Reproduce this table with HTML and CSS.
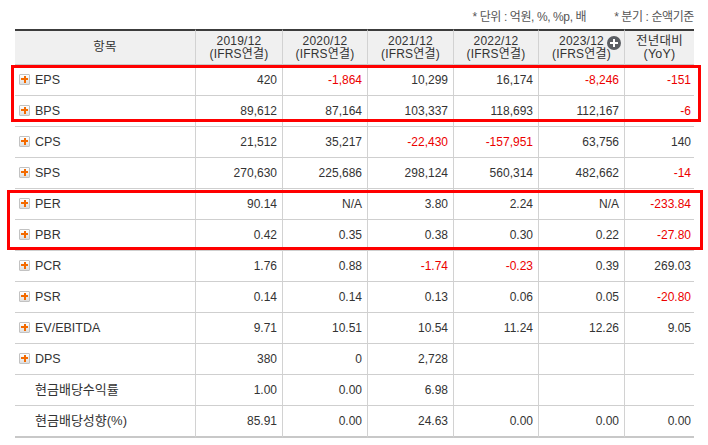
FILE: index.html
```html
<!DOCTYPE html>
<html lang="ko">
<head>
<meta charset="utf-8">
<title>재무비율</title>
<link rel="stylesheet" href="styles.css">
</head>
<body>
<div class="page">
  <div class="notes">
    <span>* 단위 : 억원, %, %p, 배</span>
    <span>* 분기 : 순액기준</span>
  </div>
  <table class="fin">
    <colgroup>
      <col class="c-label"><col class="c-87"><col class="c-85"><col class="c-86"><col class="c-85"><col class="c-86"><col class="c-yoy">
    </colgroup>
    <thead>
      <tr>
        <th class="th-ko">항목</th>
        <th>2019/12<br>(IFRS연결)</th>
        <th>2020/12<br>(IFRS연결)</th>
        <th>2021/12<br>(IFRS연결)</th>
        <th>2022/12<br>(IFRS연결)</th>
        <th class="th-more">2023/12<br>(IFRS연결)<span class="more"><svg width="14" height="14" viewBox="0 0 14 14"><circle cx="7" cy="7" r="7" fill="#5b5e63"/><path d="M3 7h8M7 3v8" stroke="#fff" stroke-width="2"/></svg></span></th>
        <th class="th-ko">전년대비<br>(YoY)</th>
      </tr>
    </thead>
    <tbody>
      <tr><td class="lbl"><span class="ico"></span>EPS</td><td>420</td><td class="neg">-1,864</td><td>10,299</td><td>16,174</td><td class="neg">-8,246</td><td class="neg">-151</td></tr>
      <tr><td class="lbl"><span class="ico"></span>BPS</td><td>89,612</td><td>87,164</td><td>103,337</td><td>118,693</td><td>112,167</td><td class="neg">-6</td></tr>
      <tr><td class="lbl"><span class="ico"></span>CPS</td><td>21,512</td><td>35,217</td><td class="neg">-22,430</td><td class="neg">-157,951</td><td>63,756</td><td>140</td></tr>
      <tr><td class="lbl"><span class="ico"></span>SPS</td><td>270,630</td><td>225,686</td><td>298,124</td><td>560,314</td><td>482,662</td><td class="neg">-14</td></tr>
      <tr><td class="lbl"><span class="ico"></span>PER</td><td>90.14</td><td>N/A</td><td>3.80</td><td>2.24</td><td>N/A</td><td class="neg">-233.84</td></tr>
      <tr><td class="lbl"><span class="ico"></span>PBR</td><td>0.42</td><td>0.35</td><td>0.38</td><td>0.30</td><td>0.22</td><td class="neg">-27.80</td></tr>
      <tr><td class="lbl"><span class="ico"></span>PCR</td><td>1.76</td><td>0.88</td><td class="neg">-1.74</td><td class="neg">-0.23</td><td>0.39</td><td>269.03</td></tr>
      <tr><td class="lbl"><span class="ico"></span>PSR</td><td>0.14</td><td>0.14</td><td>0.13</td><td>0.06</td><td>0.05</td><td class="neg">-20.80</td></tr>
      <tr><td class="lbl"><span class="ico"></span>EV/EBITDA</td><td>9.71</td><td>10.51</td><td>10.54</td><td>11.24</td><td>12.26</td><td>9.05</td></tr>
      <tr><td class="lbl"><span class="ico"></span>DPS</td><td>380</td><td>0</td><td>2,728</td><td></td><td></td><td></td></tr>
      <tr><td class="lbl plain">현금배당수익률</td><td>1.00</td><td>0.00</td><td>6.98</td><td></td><td></td><td></td></tr>
      <tr class="last"><td class="lbl plain">현금배당성향(%)</td><td>85.91</td><td>0.00</td><td>24.63</td><td>0.00</td><td>0.00</td><td>0.00</td></tr>
    </tbody>
  </table>
  <div class="hl hl-a"></div>
  <div class="hl hl-b"></div>
</div>
</body>
</html>
```
FILE: styles.css
```css
html, body {
  margin: 0;
  padding: 0;
  background: #fff;
}
.page {
  position: relative;
  width: 708px;
  height: 445px;
  padding-left: 15px;
  box-sizing: border-box;
  font-family: "Liberation Sans Narrow", "Liberation Sans", "Noto Sans CJK KR", sans-serif;
  font-size: 12px;
  color: #333;
}
.notes {
  display: flex;
  justify-content: flex-end;
  gap: 28px;
  width: 679px;
  height: 29px;
  box-sizing: border-box;
  padding-top: 10px;
  line-height: 14px;
  color: #555;
  font-size: 12px;
  letter-spacing: -0.4px;
}
.fin {
  width: 679px;
  table-layout: fixed;
  border-collapse: separate;
  border-spacing: 0;
}
.c-label { width: 180px; }
.c-87 { width: 87px; }
.c-85 { width: 85px; }
.c-86 { width: 86px; }
.c-yoy { width: 70px; }

.fin th {
  height: 36px;
  box-sizing: border-box;
  padding: 0;
  background: #f0f0f0;
  border-top: 2px solid #3c3c3c;
  border-bottom: 1px solid #c9c9c9;
  font-weight: normal;
  line-height: 13px;
  text-align: center;
  vertical-align: middle;
  color: #333;
  letter-spacing: 0.2px;
}
.fin th.th-ko {
  font-size: 12.5px;
}
.fin th + th,
.fin td + td {
  border-left: 1px solid #d2d2d2;
}
.th-more {
  position: relative;
}
.more {
  position: absolute;
  right: 3px;
  top: 5px;
  width: 14px;
  height: 14px;
  line-height: 0;
}
.fin td {
  height: 31px;
  box-sizing: border-box;
  padding: 0 5px 0 0;
  border-bottom: 1px solid #cfcfcf;
  text-align: right;
  vertical-align: middle;
  line-height: 14px;
  white-space: nowrap;
}
.fin td:last-child {
  padding-right: 3px;
}
.fin tr.last td {
  height: 32px;
  border-bottom: 2px solid #c8c8c8;
}
.fin td.lbl {
  text-align: left;
  padding-left: 4px;
  font-size: 12.5px;
}
.fin td.plain {
  padding-left: 20px;
  font-size: 13px;
}
.neg {
  color: #ec0000;
}
.ico {
  display: inline-block;
  width: 11px;
  height: 11px;
  box-sizing: border-box;
  margin-right: 5px;
  vertical-align: -1px;
  border: 1px solid #c2c2c2;
  border-radius: 1px;
  background:
    linear-gradient(#f36a00, #f36a00) 1px 3px / 7px 2px no-repeat,
    linear-gradient(#f36a00, #f36a00) 3.5px 0.5px / 2px 7px no-repeat,
    linear-gradient(#ffffff, #dedede);
}
.hl {
  position: absolute;
  border: 3px solid #ff0000;
  box-sizing: border-box;
  pointer-events: none;
}
.hl-a {
  left: 11px;
  top: 65px;
  width: 690px;
  height: 57px;
}
.hl-b {
  left: 7px;
  top: 190px;
  width: 696px;
  height: 60px;
}
```
